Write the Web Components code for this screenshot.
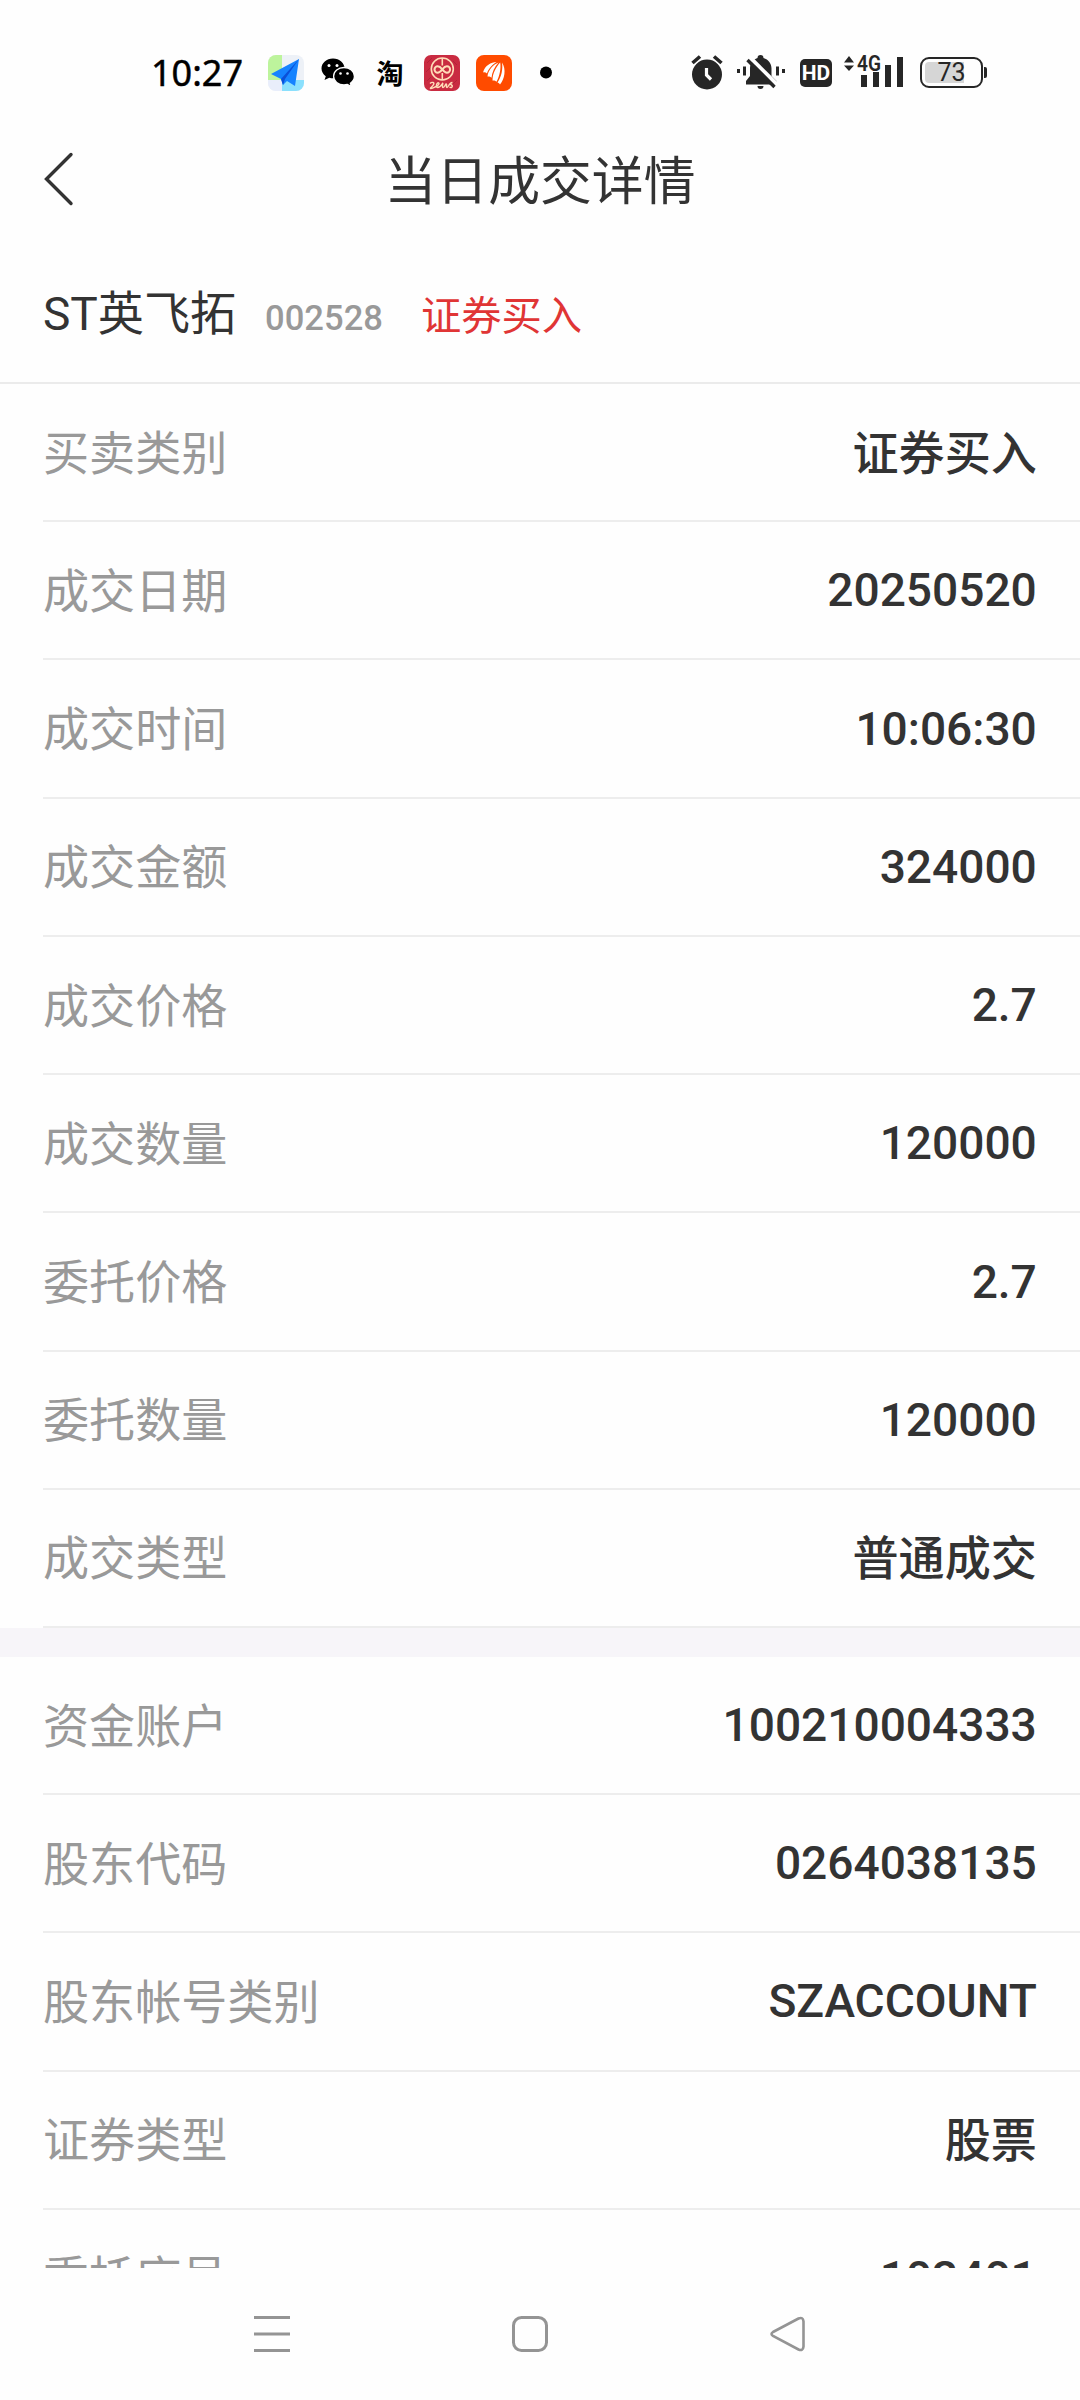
<!DOCTYPE html>
<html lang="zh-CN">
<head>
<meta charset="utf-8">
<title>当日成交详情</title>
<style>
  * {
    box-sizing: border-box;
  }

  body {
    margin: 0;
    width: 1080px;
    height: 2400px;
    overflow: hidden;
    background: #fefefe;
    color: #333;
    font-family: Roboto, "Noto Sans CJK SC", sans-serif;
  }

  main {
    display: flex;
    flex-direction: column;
    height: 2400px;
  }
</style>
</head>
<body>
<main>
  <status-bar time="10:27" battery="73"></status-bar>
  <title-bar>当日成交详情</title-bar>
  <stock-header code="002528">
    ST英飞拓
    <span slot="side">证券买入</span>
  </stock-header>
  <detail-list>
    <detail-group>
      <detail-row label="买卖类别" cjk>证券买入</detail-row>
      <detail-row label="成交日期">20250520</detail-row>
      <detail-row label="成交时间">10:06:30</detail-row>
      <detail-row label="成交金额">324000</detail-row>
      <detail-row label="成交价格">2.7</detail-row>
      <detail-row label="成交数量">120000</detail-row>
      <detail-row label="委托价格">2.7</detail-row>
      <detail-row label="委托数量">120000</detail-row>
      <detail-row label="成交类型" cjk>普通成交</detail-row>
    </detail-group>
    <detail-group>
      <detail-row label="资金账户">100210004333</detail-row>
      <detail-row label="股东代码">0264038135</detail-row>
      <detail-row label="股东帐号类别">SZACCOUNT</detail-row>
      <detail-row label="证券类型" cjk>股票</detail-row>
      <detail-row label="委托序号">103401</detail-row>
    </detail-group>
  </detail-list>
  <nav-bar></nav-bar>
</main>

<script>
class BaseElement extends HTMLElement {
  constructor() {
    super();
    this.attachShadow({ mode: "open" });
    const template = document.createElement("template");
    template.innerHTML = this.constructor.markup;
    this.shadowRoot.appendChild(template.content.cloneNode(true));
  }

  fill(selector, attribute) {
    this.shadowRoot.querySelector(selector).textContent = this.getAttribute(attribute) ?? "";
  }
}

class StatusBar extends BaseElement {
  static markup = `
    <style>
      :host {
        display: flex;
        flex: none;
        align-items: center;
        height: 118px;
        padding: 27px 93px 0 151px;
        color: #000;
      }
      svg {
        display: block;
        flex: none;
        overflow: visible;
      }
      .left, .right {
        display: flex;
        align-items: center;
      }
      .left {
        gap: 16px;
      }
      .right {
        margin-left: auto;
        color: #262626;
      }
      .time {
        width: 101px;
        font: 400 36px/40px "Noto Sans", sans-serif;
        -webkit-text-stroke: 0.5px #000;
      }
      .taobao {
        width: 36px;
        text-align: center;
        font: 700 27px/36px "Noto Sans CJK SC", sans-serif;
      }
      .hd {
        width: 32px;
        height: 28px;
        margin-left: 13px;
        border-radius: 5px;
        background: #262626;
        color: #fff;
        text-align: center;
        font: 700 21px/28px Roboto, sans-serif;
      }
      .signal {
        margin-left: 12px;
      }
      .battery {
        display: flex;
        align-items: center;
        margin-left: 16px;
      }
      .cell {
        width: 63px;
        height: 31px;
        padding: 3px;
        border: 2px solid #262626;
        border-radius: 9px;
        box-sizing: border-box;
      }
      .level {
        width: 53px;
        height: 21px;
        border-radius: 4px;
        background: linear-gradient(to right, #d6d6d6 39px, transparent 39px);
        text-align: center;
        font: 400 25px/22px Roboto, sans-serif;
      }
      .nub {
        width: 3px;
        height: 11px;
        margin-left: 1px;
        border-radius: 0 2px 2px 0;
        background: #262626;
      }
    </style>
    <div class="left">
      <span class="time"></span>
      <svg width="36" height="36" viewBox="0 0 36 36">
        <rect width="36" height="36" rx="8" fill="#edf1f7"/>
        <path d="M8 0h6v25H0V8a8 8 0 0 1 8-8z" fill="#bdf49c"/>
        <path d="M14 25h22v3a8 8 0 0 1-8 8H14z" fill="#8be0fd"/>
        <path d="M0 25h14v11H8a8 8 0 0 1-8-8z" fill="#e9eefb"/>
        <path d="M31 4 3 19l10 5 2 6 4-4 8 5z" fill="#1683ff"/>
        <path d="M31 4 13 24l2 6 2-6z" fill="#0b50d8"/>
      </svg>
      <svg width="36" height="36" viewBox="0 0 36 36">
        <path d="M13 3.500C6.500 3.500 1.500 8 1.500 13.500c0 3.200 1.700 5.900 4.300 7.700L4.500 25l4.800-2.300c1.200.4 2.500.6 3.800.6 6.500 0 11.500-4.400 11.500-9.800S19.500 3.500 13 3.500z"/>
        <path d="M24 12.500c-5.700 0-10.400 3.900-10.400 8.800S18.300 30 24 30c1.200 0 2.300-.2 3.400-.5l4 2-1-3.300c2.500-1.600 4-4.100 4-6.900 0-4.900-4.700-8.800-10.400-8.800z" stroke="#fff" stroke-width="1.300"/>
        <g fill="#fff"><circle cx="9" cy="10.500" r="1.500"/><circle cx="17" cy="10.500" r="1.500"/><circle cx="20.500" cy="18.500" r="1.300"/><circle cx="27.500" cy="18.500" r="1.300"/></g>
      </svg>
      <span class="taobao">淘</span>
      <svg width="36" height="36" viewBox="0 0 36 36">
        <rect width="36" height="36" rx="7" fill="#c92b41"/>
        <path d="M3 8l5-5M2 17l5-5M28 30l5-5M29 6l4 4M3 26l4-4" stroke="#b32338" fill="none"/>
        <g fill="none" stroke="#ffdcb8">
          <circle cx="18.300" cy="14" r="11" stroke-width="1.600"/>
          <path d="M18.300 3v7.500M18.300 18v7" stroke-width="1.600"/>
          <path d="M18.300 14.300c-1.600-2-3-3-4.600-3a3.200 3.200 0 0 0 0 6.400c1.600 0 3-1.400 4.600-3.400s3-3 4.600-3a3.200 3.200 0 0 1 0 6.400c-1.600 0-3-1.400-4.600-3.400z" stroke-width="2"/>
          <path d="M6 28.500c2-2 5-1 3.500 1.200C8 32 6 33 6.500 33.500s3-1 5.500-2c2-.8 4-3 2.500-3.700s-3.500 4.700-1 4.700 4-2.500 5-4-1 4 .5 4 2-2.500 3-3.500c1.500 0-.5 3.500 1 3.500s2-5 5.500-5c-2 0-3 1.500-1 2.500s0 3.500-2 2" stroke-width="1.400"/>
        </g>
      </svg>
      <svg width="36" height="36" viewBox="0 0 36 36">
        <rect width="36" height="36" rx="8" fill="#ff4b00"/>
        <g fill="#fff">
          <path d="M20.500 7C15 7.500 9 10 7 17.500c1.500-.5 3 0 4 1C12 14.500 15.500 10 20.500 7z"/>
          <path d="M22.500 7.500C17.500 9.500 12 15 11.500 21.500c1.500-.3 3 .2 4 1.200C16 17.500 18.500 12 22.500 7.500z"/>
          <path d="M24.200 7.500C20.500 11.500 16.500 18 16.500 25.500c1.500-.3 3 .2 4 1.200C23.500 21.500 25.200 14 24.200 7.500z"/>
          <path d="M26 7.500c1 7-.5 14-4.500 20 1 .2 2 1 2.500 2 4.500-5.500 6.500-15 2-22z"/>
        </g>
      </svg>
      <svg width="36" height="36" viewBox="0 0 36 36"><circle cx="18" cy="17.500" r="6"/></svg>
    </div>
    <div class="right">
      <svg width="32" height="36" viewBox="0 0 32 36">
        <circle cx="16" cy="19.500" r="15" fill="#262626"/>
        <path d="M1.500 8 9 1.500M30.500 8 23 1.500" stroke="#262626" stroke-width="3.600"/>
        <path d="M15.500 13v7l4.500 4.500" fill="none" stroke="#fff" stroke-width="3.200"/>
      </svg>
      <svg width="52" height="36" viewBox="0 0 52 36" style="margin-left: 12px">
        <path d="M25.500 0a3 3 0 0 1 3 3c5 1.500 8 5.500 8 10.500V21l5 5v3.500H11V26l4-5v-7.500c0-5 3-9 7.500-10.500a3 3 0 0 1 3-3z" fill="#262626"/>
        <path d="M22.500 31h6a3 3 0 0 1-6 0z" fill="#262626"/>
        <path d="M14.500 2 42.500 30" stroke="#fff" stroke-width="4"/>
        <path d="M12.500 5 39.500 32" stroke="#262626" stroke-width="3.400"/>
        <path d="M9.500 11.500v9M42.500 11.500v9M3.500 14v4M48.500 14v4" stroke="#262626" stroke-width="3"/>
      </svg>
      <span class="hd">HD</span>
      <svg class="signal" width="60" height="36" viewBox="0 0 60 36">
        <path d="M0 7.500 5 1l5 6.500zM0 10.500h10L5 16z" fill="#262626"/>
        <path d="M17 20h6v12h-6zM29 17h6v15h-6zM41 10h6v22h-6zM53 2h6v30h-6z" fill="#262626"/>
        <text x="13" y="15.500" font-family="Roboto, sans-serif" font-size="22" font-weight="600" textLength="24" lengthAdjust="spacingAndGlyphs" fill="#262626">4G</text>
      </svg>
      <div class="battery">
        <div class="cell"><div class="level"></div></div>
        <div class="nub"></div>
      </div>
    </div>
  `;

  connectedCallback() {
    this.fill(".time", "time");
    this.fill(".level", "battery");
  }
}

class TitleBar extends BaseElement {
  static markup = `
    <style>
      :host {
        display: grid;
        flex: none;
        grid-template-columns: 200px 1fr 200px;
        align-items: center;
        height: 127px;
      }
      svg {
        display: block;
        margin: 0 0 6px 43px;
      }
      h1 {
        margin: 0;
        padding-top: 2px;
        text-align: center;
        font-size: 51.840px;
        font-weight: 400;
        line-height: 60px;
      }
    </style>
    <svg width="32" height="54" viewBox="0 0 32 54">
      <path d="M28 2.500 3.500 27 28 51.500" fill="none" stroke="#333" stroke-width="3.400" stroke-linecap="round"/>
    </svg>
    <h1><slot></slot></h1>
  `;
}

class StockHeader extends BaseElement {
  static markup = `
    <style>
      :host {
        display: flex;
        flex: none;
        align-items: baseline;
        height: 139px;
        padding: 35px 43px 0;
        border-bottom: 2px solid #ebebeb;
        box-sizing: border-box;
        line-height: 68px;
      }
      .name {
        font-size: 46.080px;
      }
      .code {
        margin: 0 38px 0 29px;
        color: #999;
        font-size: 34.560px;
        font-weight: 500;
      }
      .side {
        color: #e03535;
        font-size: 40.320px;
      }
    </style>
    <span class="name"><slot></slot></span>
    <span class="code"></span>
    <span class="side"><slot name="side"></slot></span>
  `;

  connectedCallback() {
    this.fill(".code", "code");
  }
}

class DetailList extends BaseElement {
  static markup = `
    <style>
      :host {
        display: flex;
        flex: none;
        flex-direction: column;
        gap: 28.800px;
        height: 1884px;
        overflow: hidden;
        background: #f7f5f9;
      }
    </style>
    <slot></slot>
  `;
}

class DetailGroup extends BaseElement {
  static markup = `
    <style>
      :host {
        display: block;
        flex: none;
        padding-left: 43px;
        background: #fefefe;
      }
    </style>
    <slot></slot>
  `;
}

class DetailRow extends BaseElement {
  static markup = `
    <style>
      :host {
        display: flex;
        justify-content: space-between;
        align-items: center;
        height: 138.240px;
        padding-right: 43.200px;
        border-bottom: 2px solid #ededed;
        box-sizing: border-box;
        font-size: 46.080px;
        line-height: 68px;
      }
      .label {
        padding-top: 3px;
        color: #999;
      }
      .value {
        font-weight: 500;
      }
      :host([cjk]) .value {
        padding-top: 3px;
      }
    </style>
    <span class="label"></span>
    <span class="value"><slot></slot></span>
  `;

  connectedCallback() {
    this.fill(".label", "label");
  }
}

class NavBar extends BaseElement {
  static markup = `
    <style>
      :host {
        display: flex;
        flex: 1;
        justify-content: space-between;
        align-items: center;
        padding: 0 272px 0 252px;
      }
      svg {
        display: block;
        fill: none;
        stroke: #949494;
        stroke-width: 3;
      }
    </style>
    <svg width="40" height="40" viewBox="0 0 40 40">
      <path d="M2 3.500h36M2 20h36M2 36.500h36"/>
    </svg>
    <svg width="40" height="40" viewBox="0 0 40 40">
      <rect x="3.500" y="3.500" width="33" height="33" rx="8"/>
    </svg>
    <svg width="40" height="40" viewBox="0 0 40 40">
      <path d="M5 18 30.500 4.500q4.500-2 5 3v25q-.5 5-5 3L5 22q-3-2 0-4z" stroke-width="2.600"/>
    </svg>
  `;
}

customElements.define("status-bar", StatusBar);
customElements.define("title-bar", TitleBar);
customElements.define("stock-header", StockHeader);
customElements.define("detail-list", DetailList);
customElements.define("detail-group", DetailGroup);
customElements.define("detail-row", DetailRow);
customElements.define("nav-bar", NavBar);
</script>
</body>
</html>
